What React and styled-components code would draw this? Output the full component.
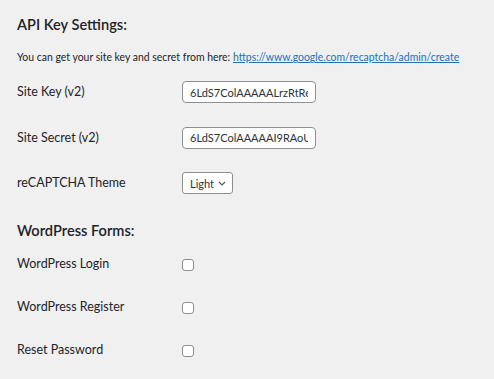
import styled, { createGlobalStyle } from "styled-components"

const GlobalStyle = createGlobalStyle`
    html, body {
        margin: 0;
        padding: 0;
        background: #f0f0f1;
    }
    body {
        font-family: Lato, "Noto Sans", sans-serif;
        color: #1d2327;
    }
`

const settings = [
    { label: "Site Key (v2)", value: "6LdS7ColAAAAALrzRtRebwQx" },
    { label: "Site Secret (v2)", value: "6LdS7ColAAAAAI9RAoU3JkPz" },
]

const forms = ["WordPress Login", "WordPress Register", "Reset Password"]

function App() {
    return (
        <Page>
            <GlobalStyle />
            <Heading>API Key Settings:</Heading>
            <Description>
                You can get your site key and secret from here:{" "}
                <a href="#create">https://www.google.com/recaptcha/admin/create</a>
            </Description>
            <Table>
                {settings.map((item) => (
                    <Row key={item.label}>
                        <Label>{item.label}</Label>
                        <TextInput type="text" defaultValue={item.value} />
                    </Row>
                ))}
                <Row>
                    <Label>reCAPTCHA Theme</Label>
                    <Select>
                        <span>Light</span>
                        <svg width="8" height="5" viewBox="0 0 8 5">
                            <path d="M1 1l3 3 3-3" fill="none" stroke="#50575e" strokeWidth="1.2" />
                        </svg>
                    </Select>
                </Row>
            </Table>
            <Heading $forms>WordPress Forms:</Heading>
            <CheckTable>
                {forms.map((name) => (
                    <CheckRow key={name}>
                        <Label>{name}</Label>
                        <Checkbox type="checkbox" />
                    </CheckRow>
                ))}
            </CheckTable>
        </Page>
    )
}

export default App

const Page = styled.div`
    padding: 15px 17px 0;
    width: 494px;
    height: 379px;
    box-sizing: border-box;
    overflow: hidden;
`
const Heading = styled.h2`
    margin: 0;
    margin-top: ${(props) => (props.$forms ? "27px" : "0")};
    font-size: 14.6px;
    font-weight: 600;
    line-height: 20px;
    color: #1d2327;
`
const Description = styled.p`
    margin: 14px 0 0;
    font-size: 10.45px;
    line-height: 16px;
    white-space: nowrap;

    a {
        color: #2271b1;
        text-decoration: underline;
    }
`
const Table = styled.div`
    display: flex;
    flex-direction: column;
    gap: 23.5px;
    margin-top: 16px;
`
const Row = styled.div`
    display: flex;
    align-items: flex-start;
`
const Label = styled.div`
    width: 165px;
    flex: 0 0 165px;
    padding-top: 2px;
    font-size: 12.5px;
    line-height: 18px;
`
const TextInput = styled.input`
    box-sizing: border-box;
    width: 134px;
    height: 22px;
    padding: 0 7px;
    border: 1px solid #8c8f94;
    border-radius: 4px;
    background: #fff;
    font-family: inherit;
    font-size: 11px;
    color: #2c3338;
    outline: none;
`
const Select = styled.div`
    box-sizing: border-box;
    display: flex;
    align-items: center;
    gap: 4px;
    height: 22px;
    padding: 0 6px 0 7px;
    border: 1px solid #8c8f94;
    border-radius: 3px;
    background: #fff;
    font-size: 11px;
    color: #2c3338;
`
const CheckTable = styled.div`
    display: flex;
    flex-direction: column;
    gap: 23px;
    margin-top: 12px;
`
const CheckRow = styled.div`
    display: flex;
    align-items: flex-start;
`
const Checkbox = styled.input`
    appearance: none;
    box-sizing: border-box;
    width: 12px;
    height: 12px;
    margin: 6px 0 0;
    border: 1px solid #8c8f94;
    border-radius: 3px;
    background: #fff;
`
